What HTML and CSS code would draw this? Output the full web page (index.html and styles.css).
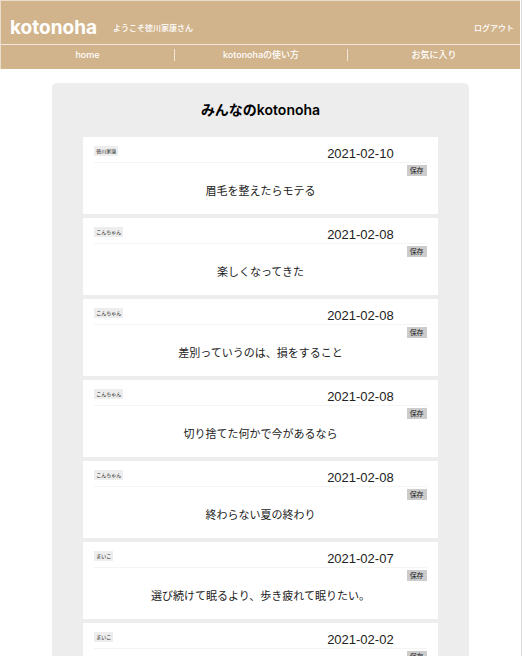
FILE: index.html
```html
<!DOCTYPE html>
<html lang="ja">
<head>
<meta charset="utf-8">
<meta name="viewport" content="width=device-width, initial-scale=1">
<title>kotonoha</title>
<link rel="stylesheet" href="styles.css">
</head>
<body>
<header class="header">
  <div class="header-top">
    <a class="logo" href="#">kotonoha</a>
    <p class="welcome">ようこそ徳川家康さん</p>
    <a class="logout" href="#">ログアウト</a>
  </div>
  <nav class="nav">
    <a class="nav-link" href="#">home</a>
    <a class="nav-link" href="#">kotonohaの使い方</a>
    <a class="nav-link" href="#">お気に入り</a>
  </nav>
</header>
<main class="panel">
  <h1 class="title">みんなのkotonoha</h1>
  <div class="posts">
    <article class="post">
      <div class="post-head"><a class="author" href="#">徳川家康</a><time class="date">2021-02-10</time></div>
      <button class="save" type="button">保存</button>
      <p class="message">眉毛を整えたらモテる</p>
    </article>
    <article class="post">
      <div class="post-head"><a class="author" href="#">こんちゃん</a><time class="date">2021-02-08</time></div>
      <button class="save" type="button">保存</button>
      <p class="message">楽しくなってきた</p>
    </article>
    <article class="post">
      <div class="post-head"><a class="author" href="#">こんちゃん</a><time class="date">2021-02-08</time></div>
      <button class="save" type="button">保存</button>
      <p class="message">差別っていうのは、損をすること</p>
    </article>
    <article class="post">
      <div class="post-head"><a class="author" href="#">こんちゃん</a><time class="date">2021-02-08</time></div>
      <button class="save" type="button">保存</button>
      <p class="message">切り捨てた何かで今があるなら</p>
    </article>
    <article class="post">
      <div class="post-head"><a class="author" href="#">こんちゃん</a><time class="date">2021-02-08</time></div>
      <button class="save" type="button">保存</button>
      <p class="message">終わらない夏の終わり</p>
    </article>
    <article class="post">
      <div class="post-head"><a class="author" href="#">まいこ</a><time class="date">2021-02-07</time></div>
      <button class="save" type="button">保存</button>
      <p class="message">選び続けて眠るより、歩き疲れて眠りたい。</p>
    </article>
    <article class="post">
      <div class="post-head"><a class="author" href="#">まいこ</a><time class="date">2021-02-02</time></div>
      <button class="save" type="button">保存</button>
    </article>
  </div>
</main>
</body>
</html>
```
FILE: styles.css
```css
* {
  box-sizing: border-box;
}

body {
  margin: 0;
  border-right: 1px solid #dcdcdc;
  background: #fff;
  color: #222;
  font-family: Inter, "Noto Sans CJK JP", sans-serif;
}

a {
  color: inherit;
  text-decoration: none;
}

h1,
p {
  margin: 0;
}

.header {
  margin-right: 1px;
  border-top: 1px solid #e9dccb;
  border-left: 1px solid #e9dccb;
  background: #d2b48c;
  color: #fff;
  font-size: 8px;
  font-weight: 500;
}

.header-top {
  display: flex;
  align-items: center;
  height: 44px;
  padding: 10px 6px 0 9px;
  border-bottom: 1px solid #f0e6d9;
}

.logo {
  font-size: 19px;
  font-weight: 700;
  line-height: 24px;
}

.welcome {
  margin-left: 16px;
}

.logout {
  margin-left: auto;
}

.nav {
  display: grid;
  grid-template-columns: repeat(3, 1fr);
  padding: 4px 0 8px;
}

.nav-link {
  font-size: 9px;
  line-height: 12px;
  text-align: center;
}

.nav-link + .nav-link {
  border-left: 1px solid #f0e6d9;
}

.panel {
  width: 80%;
  margin: 14px auto 0;
  padding: 17px 0 32px;
  border-radius: 5px;
  background: #ededed;
}

.title {
  color: #000;
  font-size: 14px;
  font-weight: 600;
  line-height: 20px;
  text-align: center;
}

.posts {
  display: grid;
  gap: 4px;
  width: 85%;
  margin: 17px auto 0;
}

.post {
  display: flex;
  flex-direction: column;
  min-height: 77px;
  padding: 7px 11px 15px;
  background: #fff;
}

.post-head {
  display: flex;
  align-items: flex-start;
  justify-content: space-between;
  padding: 2px 33px 0 0;
  border-bottom: 1px solid #f4f4f4;
}

.author {
  padding: 0 2px;
  background: #ededed;
  font-size: 5px;
  line-height: 10px;
}

.date {
  font-family: "Liberation Sans", sans-serif;
  font-size: 13px;
  line-height: 16px;
}

.save {
  align-self: flex-end;
  margin: 2px 0 0;
  padding: 0 3px;
  border: 0;
  background: #ccc;
  color: #222;
  font: 7px/11px Inter, "Noto Sans CJK JP", sans-serif;
}

.message {
  margin-top: 7px;
  font-size: 11px;
  line-height: 16px;
  text-align: center;
}
```
